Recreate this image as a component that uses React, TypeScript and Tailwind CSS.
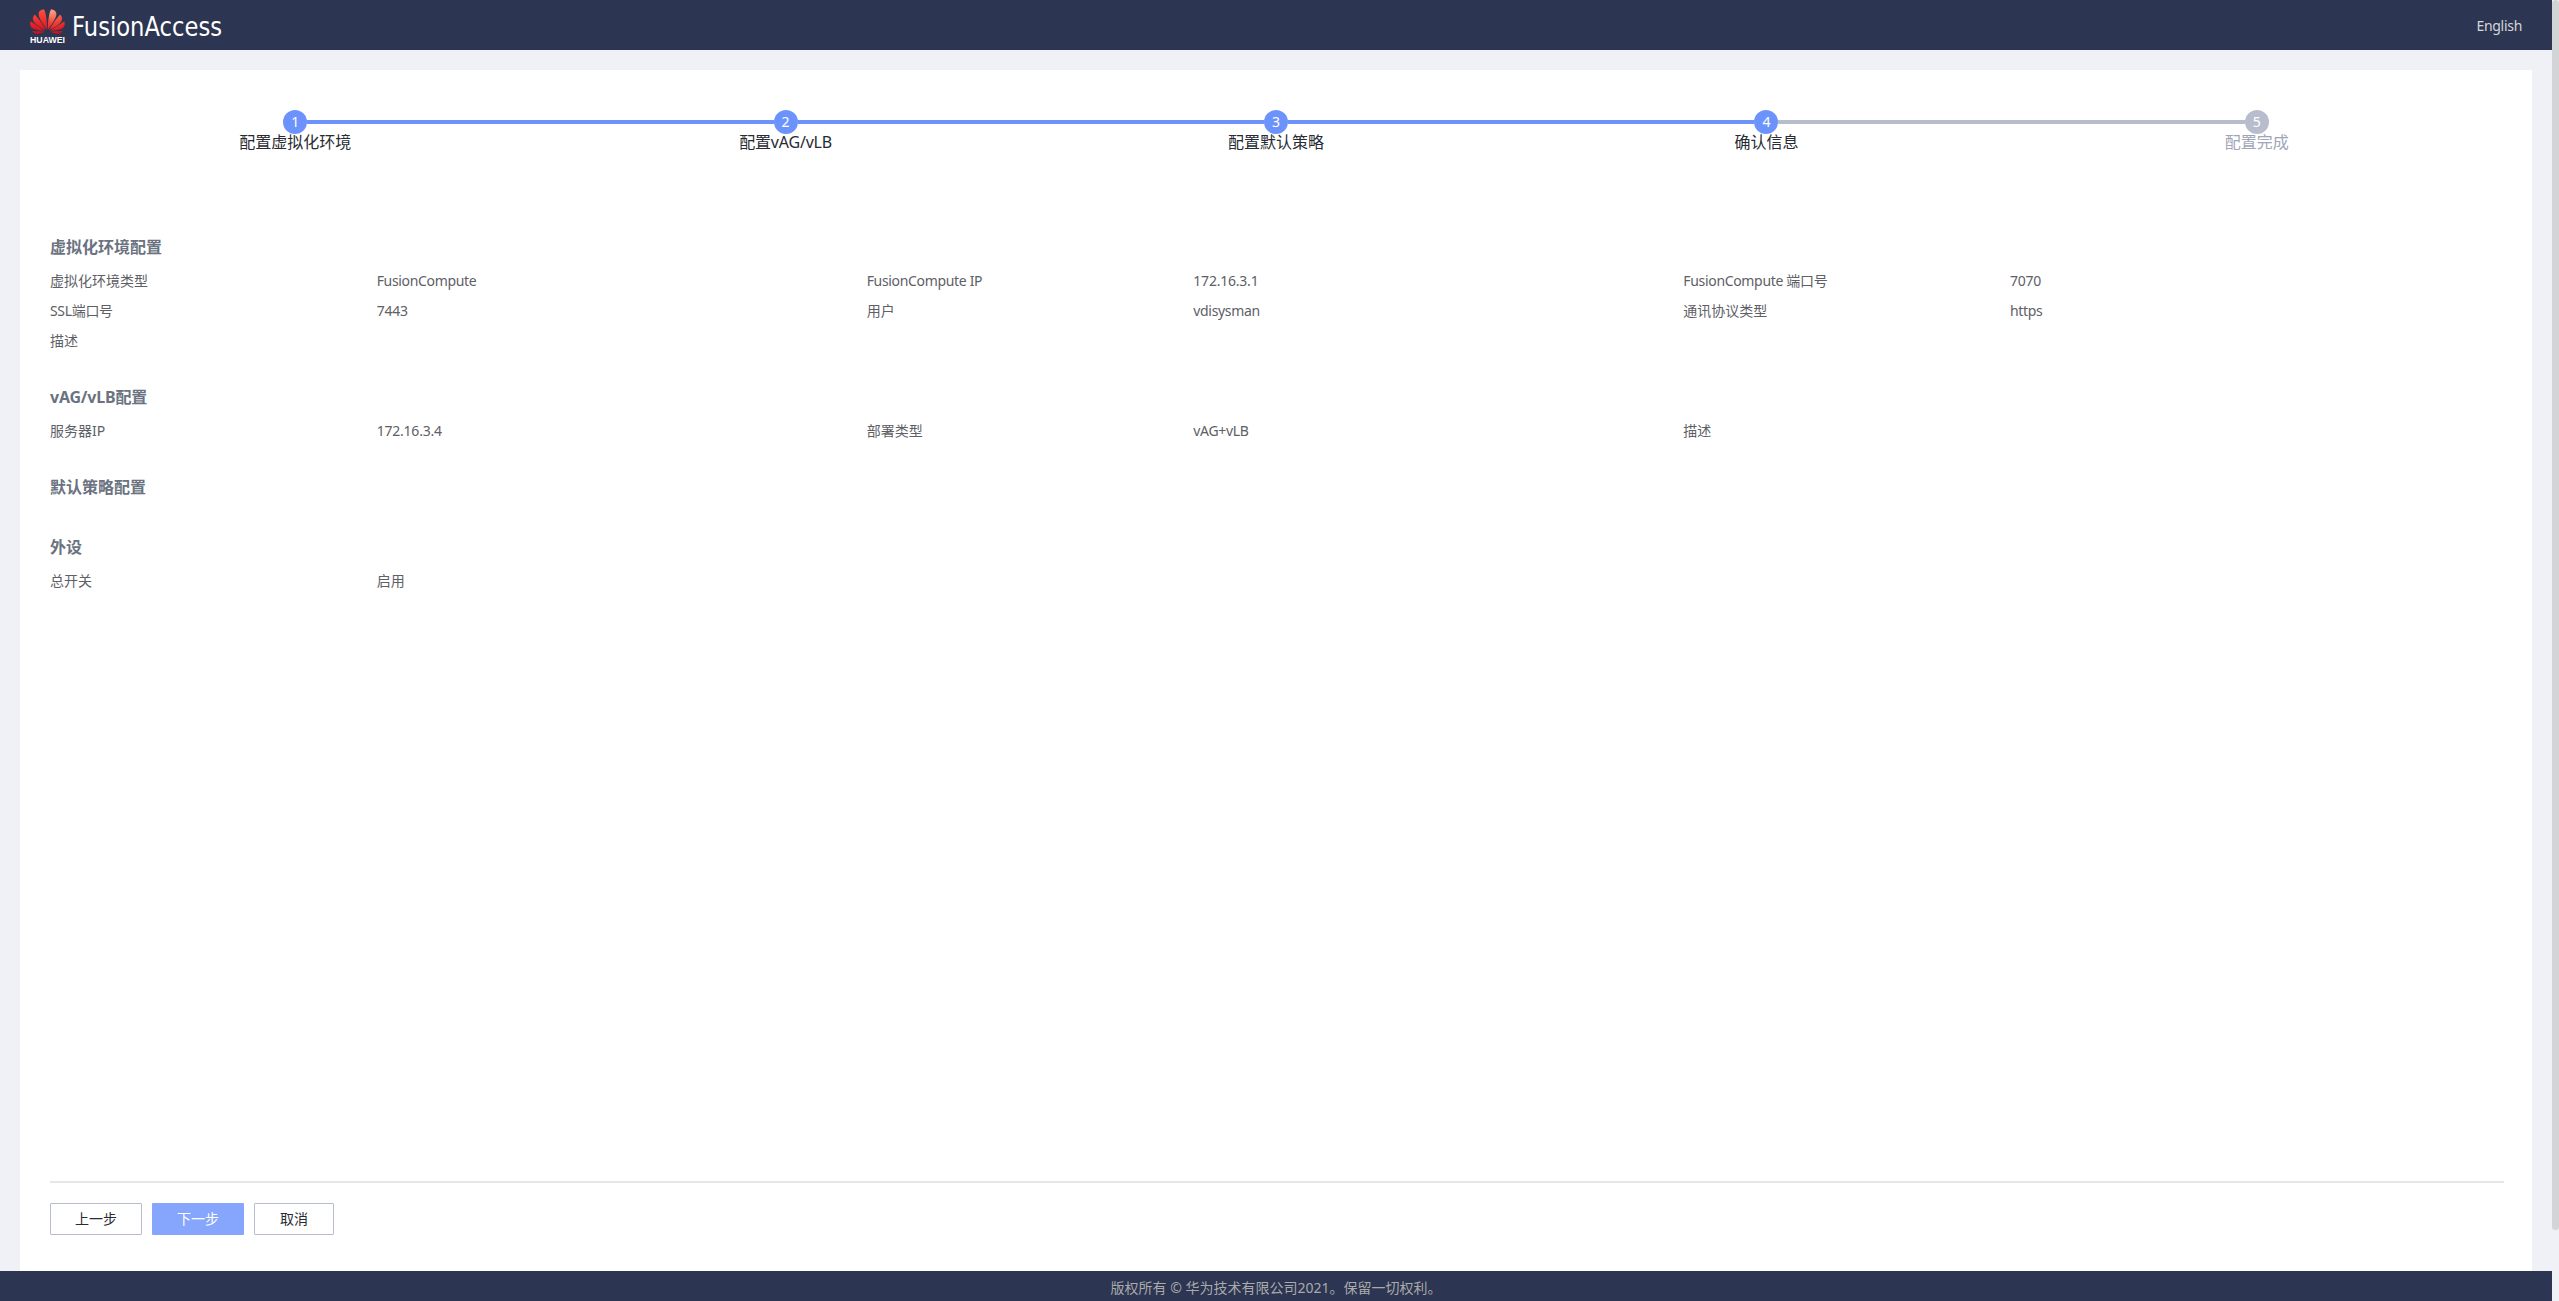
import React from "react";

type Field = { label: string; value: string };

const steps = [
  { label: "配置虚拟化环境", done: true },
  { label: "配置vAG/vLB", done: true },
  { label: "配置默认策略", done: true },
  { label: "确认信息", done: true },
  { label: "配置完成", done: false },
];

const sections: { title: string; fields: Field[] }[] = [
  {
    title: "虚拟化环境配置",
    fields: [
      { label: "虚拟化环境类型", value: "FusionCompute" },
      { label: "FusionCompute IP", value: "172.16.3.1" },
      { label: "FusionCompute 端口号", value: "7070" },
      { label: "SSL端口号", value: "7443" },
      { label: "用户", value: "vdisysman" },
      { label: "通讯协议类型", value: "https" },
      { label: "描述", value: "" },
    ],
  },
  {
    title: "vAG/vLB配置",
    fields: [
      { label: "服务器IP", value: "172.16.3.4" },
      { label: "部署类型", value: "vAG+vLB" },
      { label: "描述", value: "" },
    ],
  },
  { title: "默认策略配置", fields: [] },
  { title: "外设", fields: [{ label: "总开关", value: "启用" }] },
];

// Latin words sit slightly tighter than the Chinese text around them.
function tracking(text: string) {
  if (/^[\d.]+$/.test(text)) return "tracking-[-0.22px]";
  if (/^[A-Za-z]{2}/.test(text)) return "tracking-[-0.33px]";
  return "";
}

function Logo() {
  const half = (
    <>
      <path d="M17.1 23.2C17.2 17 16.2 4.5 14 0.4C10.8 0.7 8.4 3 8.6 5.8C8.8 10.5 13.6 18.2 17.1 23.2Z" />
      <path d="M15.9 23.6C12.7 17.5 8.2 10.2 4.9 6.2C2.6 8.6 2.2 11.4 3.8 14.2C6 18 11.5 21.3 15.9 23.6Z" />
      <path d="M15 24.3C10.5 21.3 4.5 17 0.6 13.8C-0.5 17.8 0.5 20.6 3.4 22.3C6.3 23.8 11.6 24.3 15 24.3Z" />
      <path d="M14.9 25.2C11 25.2 6 25 2.2 24.7C3.5 27.4 6.2 28.3 8.7 27.7C10.9 27.2 13.2 26.2 14.9 25.2Z" />
    </>
  );
  return (
    <svg width="200" height="50" viewBox="0 -9 200 50" className="block">
      <defs>
        <linearGradient id="petalLeft" gradientUnits="userSpaceOnUse" x1="0" y1="0" x2="0" y2="28">
          <stop offset="0" stopColor="#f7553f" />
          <stop offset="0.5" stopColor="#ee2a2c" />
          <stop offset="1" stopColor="#cc0d18" />
        </linearGradient>
        <radialGradient id="petalRight" gradientUnits="userSpaceOnUse" cx="13" cy="3" r="25">
          <stop offset="0" stopColor="#f9a083" />
          <stop offset="0.5" stopColor="#f04437" />
          <stop offset="1" stopColor="#cc0d18" />
        </radialGradient>
      </defs>
      <g transform="scale(1 0.89)" fill="url(#petalLeft)">{half}</g>
      <g transform="translate(35 0) scale(-1 0.89)" fill="url(#petalRight)">{half}</g>
      <text x="0" y="33.9" fontFamily="Liberation Sans" fontWeight="700" fontSize="8.4" fill="#fff" textLength="35" lengthAdjust="spacingAndGlyphs">HUAWEI</text>
      <text x="42" y="26.7" fontFamily="DejaVu Sans" fontSize="27" fill="#fff" textLength="150" lengthAdjust="spacingAndGlyphs">FusionAccess</text>
    </svg>
  );
}

export default function App() {
  return (
    <div className="flex h-[1301px] w-[2559px] overflow-hidden bg-[#eff1f6] font-['Noto_Sans','Noto_Sans_CJK_SC',sans-serif] text-sm text-[#5e6066]">
      <div className="flex min-w-0 flex-1 flex-col">
        <header className="flex h-[50px] items-start justify-between bg-[#2c3552] px-[30px]">
          <Logo />
          <span className="mt-4 text-sm leading-5 tracking-[-0.3px] text-[#d5d7dc]">English</span>
        </header>

        <main className="mx-5 mt-5 flex min-h-0 flex-1 flex-col bg-white px-[30px] pt-10">
          <ol className="flex w-[2452px]">
            {steps.map((step, i) => (
              <li key={step.label} className="flex flex-1 flex-col items-center">
                <div className="flex w-full items-center">
                  <span className={`h-1 flex-1 ${i === 0 ? "" : step.done ? "bg-[#6c93fc]" : "bg-[#b7bdcc]"}`} />
                  <span className={`flex size-6 items-center justify-center rounded-full text-sm text-white ${step.done ? "bg-[#6c93fc]" : "bg-[#b7bdcc]"}`}>
                    {i + 1}
                  </span>
                  <span className={`h-1 flex-1 ${i === steps.length - 1 ? "" : steps[i + 1].done ? "bg-[#6c93fc]" : "bg-[#b7bdcc]"}`} />
                </div>
                <span className={`-mt-0.5 text-base leading-5 ${step.label.includes("/") ? "tracking-[-0.2px]" : ""} ${step.done ? "text-[#282b33]" : "text-[#a0a6b8]"}`}>
                  {step.label}
                </span>
              </li>
            ))}
          </ol>

          <div className="mt-20 w-[2450px] flex-1">
            {sections.map((section) => (
              <section key={section.title} className="mb-[26px]">
                <h2 className={`h-[34px] pt-px text-base leading-7 font-bold text-[#6b7280] ${section.title.includes("/") ? "tracking-[-0.2px]" : ""}`}>
                  {section.title}
                </h2>
                <div className="grid grid-cols-3">
                  {section.fields.map((field, i) => (
                    <div key={i} className="flex h-[30px] leading-[30px]">
                      <span className={`w-2/5 ${tracking(field.label)}`}>{field.label}</span>
                      <span className={`w-3/5 ${tracking(field.value)}`}>{field.value}</span>
                    </div>
                  ))}
                </div>
              </section>
            ))}
          </div>

          <div className="flex h-[90px] w-[2454px] items-start gap-2.5 border-t-2 border-[#e6e6e6] pt-5 text-[#282b33]">
            <button className="h-8 w-[92px] rounded-[1px] border border-[#b7bdcc]">上一步</button>
            <button className="h-8 w-[92px] rounded-[1px] bg-[#86a5fd] text-white">下一步</button>
            <button className="h-8 w-20 rounded-[1px] border border-[#b7bdcc]">取消</button>
          </div>
        </main>

        <footer className="flex h-[30px] items-center justify-center bg-[#2c3552] pt-1 text-[#aaaaaa]">
          版权所有 © 华为技术有限公司2021。保留一切权利。
        </footer>
      </div>
      <div className="w-[7px] bg-[#eff1f6]">
        <div className="h-[1230px] rounded-[3.5px] bg-[#d3d4d6]" />
      </div>
    </div>
  );
}
